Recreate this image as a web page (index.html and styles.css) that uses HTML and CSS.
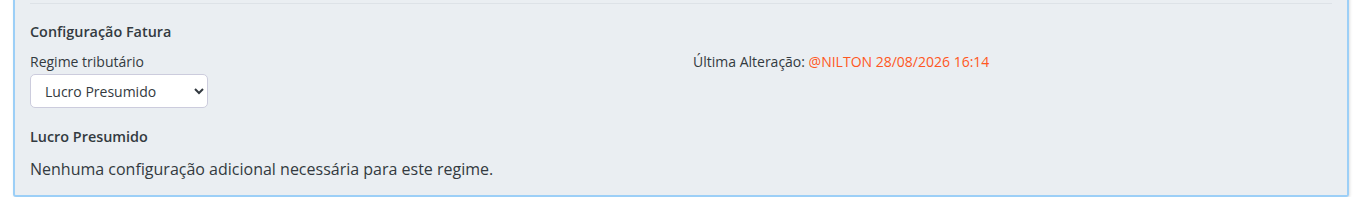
FILE: index.html
```html
<!DOCTYPE html>
<html lang="pt-BR">
<head>
  <meta charset="UTF-8" />
  <title>Configuração Fatura</title>
  <link rel="stylesheet" href="styles.css">
</head>
<body>
  <div class="painel">
    <hr class="divisor" />
    <h4 class="titulo">Configuração Fatura</h4>

    <div class="linha">
      <div class="campo">
        <label for="regime">Regime tributário</label>
        <select id="regime">
          <option>Lucro Presumido</option>
          <option>Lucro Real</option>
          <option>Simples Nacional</option>
        </select>
      </div>
      <div class="alteracao">
        Última Alteração: <span class="usuario">@NILTON 28/08/2026 16:14</span>
      </div>
    </div>

    <h5 class="subtitulo">Lucro Presumido</h5>
    <p class="info">Nenhuma configuração adicional necessária para este regime.</p>
  </div>
</body>
</html>
```

FILE: styles.css
```css
:root {
  --fundo: #eaeef2;
  --borda: #9ccff7;
  --texto: #333a40;
  --laranja: #ff5722;
}
body {
  margin: 0;
  font-family: "Open Sans", Arial, sans-serif;
  background: #fff;
  color: var(--texto);
}
.painel {
  margin: -9px 0 0 13px;
  width: 1336px;
  background: var(--fundo);
  border: 2px solid var(--borda);
  border-top: none;
  border-radius: 0 0 3px 3px;
  box-shadow: 1px 1px 3px rgba(0,0,0,0.12);
  padding: 12px 15px 15px;
  box-sizing: border-box;
}
.divisor {
  border: none;
  border-top: 1px solid #dde2e7;
  margin: 0;
}
.titulo {
  font-size: 14.4px;
  font-weight: 600;
  margin: 18px 0 11px;
}
.linha {
  display: grid;
  grid-template-columns: 663px 1fr;
}
.campo label {
  display: block;
  font-size: 14px;
  margin-bottom: 3px;
}
.campo select {
  width: 178px;
  height: 34px;
  font-family: inherit;
  font-size: 14px;
  color: var(--texto);
  background: #fff;
  border: 1px solid #ccd;
  border-radius: 5px;
  padding: 0 10px;
}
.alteracao {
  font-size: 14px;
}
.usuario {
  color: var(--laranja);
}
.subtitulo {
  font-size: 14.4px;
  font-weight: 600;
  margin: 19px 0 12px;
}
.info {
  font-size: 16px;
  margin: 0;
}
```
